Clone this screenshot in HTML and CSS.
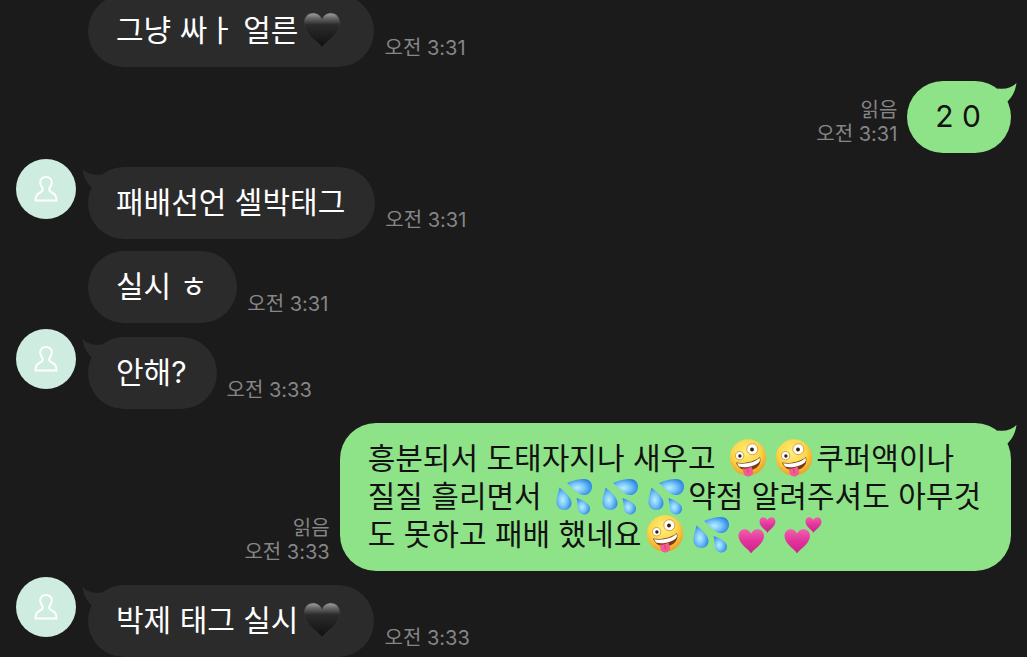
FILE: index.html
```
<!DOCTYPE html>
<html lang="ko">

<head>
    <meta charset="UTF-8">
    <meta name="viewport" content="width=device-width, initial-scale=1">
    <title>채팅</title>
    <link rel="stylesheet" href="styles.css">
</head>

<body>
    <svg class="sprite" aria-hidden="true">
        <defs>
            <linearGradient id="heart-fill" x1="0" y1="0" x2="0" y2="1">
                <stop offset="0" stop-color="#a2a2a4" />
                <stop offset="0.14" stop-color="#6a6a6c" />
                <stop offset="0.34" stop-color="#2b2b2c" />
                <stop offset="1" stop-color="#101011" />
            </linearGradient>
            <radialGradient id="face-fill" cx="0.45" cy="0.35" r="0.65">
                <stop offset="0" stop-color="#fff07a" />
                <stop offset="0.6" stop-color="#fcd549" />
                <stop offset="1" stop-color="#ee9f25" />
            </radialGradient>
            <radialGradient id="drop-fill" cx="0.42" cy="0.55" r="0.6">
                <stop offset="0" stop-color="#b9edff" />
                <stop offset="0.45" stop-color="#7cc8fa" />
                <stop offset="1" stop-color="#2a86e2" />
            </radialGradient>
            <linearGradient id="pink-fill" x1="0" y1="0" x2="0" y2="1">
                <stop offset="0" stop-color="#f25fae" />
                <stop offset="0.5" stop-color="#e0349b" />
                <stop offset="1" stop-color="#cf1f8c" />
            </linearGradient>
        </defs>
        <symbol id="black-heart" viewBox="0 0 38 38">
            <path d="M19 36.500C16 31 1 24 1 12C1 6 5 2 10 2C14.500 2 17.500 4.500 19 8C20.500 4.500 23.500 2 28 2C33 2 37 6 37 12C37 24 22 31 19 36.500Z" fill="url(#heart-fill)" stroke="#38383a" stroke-width="0.500" />
        </symbol>
        <symbol id="zany" viewBox="0 0 38 38">
            <circle cx="19" cy="18.500" r="18.200" fill="url(#face-fill)" />
            <circle cx="10.600" cy="16.700" r="4.200" fill="#fff" stroke="#c98f35" stroke-width="0.800" />
            <circle cx="10.900" cy="17" r="1.700" fill="#35200f" />
            <circle cx="23.300" cy="10.200" r="5.500" fill="#fff" stroke="#c98f35" stroke-width="0.800" />
            <circle cx="23" cy="10.500" r="1.900" fill="#35200f" />
            <path d="M7 23.500C15 25 25 23 31 18C33 25 28 30 21 31.500C15 32.500 9 29 7 23.500Z" fill="#7a3c14" />
            <path d="M8 24.200C16 25.600 25 23.600 30.500 19C31.300 20.500 31 22 30 23.200C25 27.500 16 29.500 10 27.600Z" fill="#fff" />
            <path d="M13.500 29.500C17 30 20 29 22.500 27.500L24 32.500C25 38 16 39.500 14.800 34.500Z" fill="#f25c93" />
            <path d="M18.500 30L19.500 34" stroke="#cf3a72" stroke-width="0.900" fill="none" />
        </symbol>
        <symbol id="drops" viewBox="0 0 38 38">
            <path d="M12 6C18 3.500 24 2 29 2C34 2 37.200 5.500 37 10C36.800 15 33 18.500 28 18C22 17 17.500 10.500 12 6Z" fill="url(#drop-fill)" />
            <path d="M4.500 10.500C9 14.500 16.500 20 16.500 26C16.500 30 13.500 33 9.500 33C4.500 33 1.500 29.500 1.500 25C1.500 20 3.500 15 4.500 10.500Z" fill="url(#drop-fill)" />
            <path d="M21.500 21C26 22.500 35 26 35 31.500C35 35 32.500 37.500 29.500 37.500C26 37.500 23.500 35 23 31.500C22.500 28 22.500 24.500 21.500 21Z" fill="url(#drop-fill)" />
        </symbol>
        <symbol id="two-hearts" viewBox="0 0 38 38">
            <path d="M13 38.500C11.500 34.500 0.500 29 0.500 21C0.500 13.500 9.500 11.500 13 18.500C16.500 11.500 26 13.500 26 21C26 29 15 34.500 13 38.500Z" fill="url(#pink-fill)" />
            <path d="M29.500 18C28.500 15 21.500 12 21.500 6.500C21.500 1.500 27 0.500 29.300 5C31.500 0.500 37.500 1.500 37.500 6.500C37.500 12 30.500 15 29.500 18Z" fill="url(#pink-fill)" />
        </symbol>
        <symbol id="person" viewBox="0 0 24 28">
            <path d="M12 2C8.500 2 6.200 4.300 6.200 7.500C6.200 10 7.400 11.500 8.400 13C9.500 15 8.800 16 7 17C3.500 18.800 1.500 20 1.500 25.500H22.500C22.500 20 20.500 18.800 17 17C15.200 16 14.500 15 15.600 13C16.600 11.500 17.800 10 17.800 7.500C17.800 4.300 15.500 2 12 2Z" fill="none" stroke="#fff" stroke-width="2" stroke-linejoin="round" />
        </symbol>
        <symbol id="tail" viewBox="0 0 32 26">
            <path d="M0.500 3C5 7.500 11 9.500 19 8.500L28 14L14 26L9 21C4 16 1.500 10 0.500 3Z" />
        </symbol>
    </svg>

    <main class="chat">
        <div class="message">
            <p class="bubble">그냥 싸ㅏ 얼른<svg class="emoji" role="img" aria-label="🖤"><use href="#black-heart" /></svg></p>
            <div class="meta"><time>오전 3:31</time></div>
        </div>

        <div class="message mine">
            <p class="bubble">2 0<svg class="tail" aria-hidden="true"><use href="#tail" /></svg></p>
            <div class="meta"><span>읽음</span><time>오전 3:31</time></div>
        </div>

        <div class="message">
            <div class="avatar"><svg class="person" aria-hidden="true"><use href="#person" /></svg></div>
            <p class="bubble">패배선언 셀박태그<svg class="tail" aria-hidden="true"><use href="#tail" /></svg></p>
            <div class="meta"><time>오전 3:31</time></div>
        </div>

        <div class="message follow">
            <p class="bubble">실시 ㅎ</p>
            <div class="meta"><time>오전 3:31</time></div>
        </div>

        <div class="message">
            <div class="avatar"><svg class="person" aria-hidden="true"><use href="#person" /></svg></div>
            <p class="bubble">안해?<svg class="tail" aria-hidden="true"><use href="#tail" /></svg></p>
            <div class="meta"><time>오전 3:33</time></div>
        </div>

        <div class="message mine">
            <p class="bubble">흥분되서 도태자지나 새우고 <svg class="emoji" role="img" aria-label="🤪"><use href="#zany" /></svg><svg class="emoji" role="img" aria-label="🤪"><use href="#zany" /></svg>쿠퍼액이나<br>질질 흘리면서 <svg class="emoji" role="img" aria-label="💦"><use href="#drops" /></svg><svg class="emoji" role="img" aria-label="💦"><use href="#drops" /></svg><svg class="emoji" role="img" aria-label="💦"><use href="#drops" /></svg>약점 알려주셔도 아무것<br>도 못하고 패배 했네요<svg class="emoji" role="img" aria-label="🤪"><use href="#zany" /></svg><svg class="emoji" role="img" aria-label="💦"><use href="#drops" /></svg><svg class="emoji" role="img" aria-label="💕"><use href="#two-hearts" /></svg><svg class="emoji" role="img" aria-label="💕"><use href="#two-hearts" /></svg><svg class="tail" aria-hidden="true"><use href="#tail" /></svg></p>
            <div class="meta"><span>읽음</span><time>오전 3:33</time></div>
        </div>

        <div class="message">
            <div class="avatar"><svg class="person" aria-hidden="true"><use href="#person" /></svg></div>
            <p class="bubble">박제 태그 실시<svg class="emoji" role="img" aria-label="🖤"><use href="#black-heart" /></svg><svg class="tail" aria-hidden="true"><use href="#tail" /></svg></p>
            <div class="meta"><time>오전 3:33</time></div>
        </div>
    </main>
</body>

</html>
```
FILE: styles.css
```
* {
    box-sizing: border-box;
}

body {
    margin: 0;
    background: #1b1b1b;
    font-family: Inter, "Noto Sans CJK KR", sans-serif;
}

.sprite {
    position: absolute;
    width: 0;
    height: 0;
}

/* 최신 메시지가 항상 아래에 붙는다 */
.chat {
    display: flex;
    flex-direction: column;
    justify-content: flex-end;
    gap: 14px;
    height: 100vh;
    padding: 0 16px;
    overflow: hidden;
}

.message {
    display: grid;
    grid-template-columns: 60px auto 1fr;
    flex-shrink: 0;
    align-items: end;
}

.message.follow {
    margin-top: -2px;
}

.message.mine {
    display: flex;
    flex-direction: row-reverse;
}

.avatar {
    display: flex;
    align-items: center;
    justify-content: center;
    align-self: start;
    width: 60px;
    height: 60px;
    margin-top: -8px;
    border-radius: 50%;
    background: #cfece1;
}

.person {
    width: 24px;
    height: 28px;
}

.bubble {
    grid-column: 2;
    position: relative;
    margin: 0 0 0 12px;
    padding: 16px 30px 18px 28px;
    border-radius: 36px;
    background: #2b2b2b;
    color: #fff;
    font-size: 30px;
    line-height: 38px;
}

.mine .bubble {
    margin: 0;
    background: #8ee388;
    color: #111;
}

.meta {
    grid-column: 3;
    display: flex;
    flex-direction: column;
    flex-shrink: 0;
    margin: 0 10px 7px;
    color: #868686;
    font-size: 20px;
    line-height: 24px;
}

.mine .meta {
    text-align: right;
}

.emoji {
    width: 38px;
    height: 38px;
    margin: 0 3px 0 5px;
    vertical-align: top;
}

.tail {
    position: absolute;
    top: -1px;
    left: -6px;
    width: 32px;
    height: 26px;
    fill: #2b2b2b;
}

.mine .tail {
    left: auto;
    right: -6px;
    fill: #8ee388;
    transform: scaleX(-1);
}
```
